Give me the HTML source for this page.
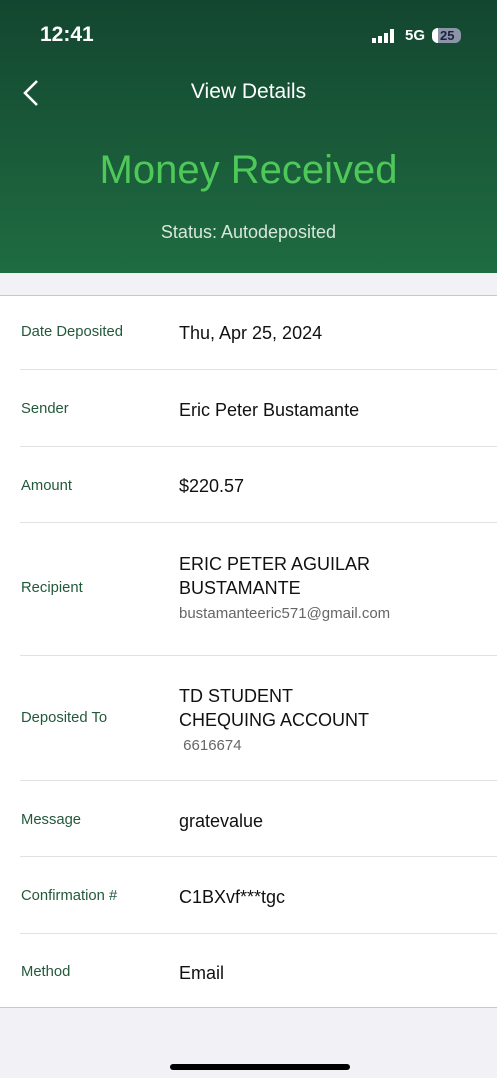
<!DOCTYPE html><html><head><style>
body{margin:0;width:497px;height:1078px;position:relative;background:#f2f1f6;font-family:"Liberation Sans",sans-serif;overflow:hidden}
.hd{position:absolute;left:0;top:0;width:497px;height:273px;background:linear-gradient(#134630,#1f6c41)}
.a{position:absolute;white-space:nowrap}
.card{position:absolute;left:0;top:295px;width:497px;height:711px;background:#fff;border-top:1px solid #c8c8c8;border-bottom:1px solid #c8c8c8}
.sep{position:absolute;left:20px;right:0;height:1px;background:#e2e2e2}
.l{position:absolute;left:21px;font-size:14.8px;color:#23593b}
.v{position:absolute;left:179px;font-size:18px;color:#111;line-height:24px}
.s{font-size:15px;color:#666}
</style></head><body>
<div class="hd"></div>
<div class="a" style="left:40px;top:23px;font-size:21px;font-weight:bold;color:#fff">12:41</div>
<div class="a" style="left:372px;top:28px;width:23px;height:15px">
<div style="position:absolute;left:0;bottom:0;width:4px;height:5px;background:#fff"></div>
<div style="position:absolute;left:6px;bottom:0;width:4px;height:7px;background:#fff"></div>
<div style="position:absolute;left:12px;bottom:0;width:4px;height:10px;background:#fff"></div>
<div style="position:absolute;left:18px;bottom:0;width:4px;height:14px;background:#fff"></div></div>
<div class="a" style="left:405px;top:27px;font-size:15px;font-weight:bold;color:#fff">5G</div>
<div class="a" style="left:432px;top:28px;width:29px;height:15px;border-radius:6px;background:#8c94a8;overflow:hidden"><div style="position:absolute;left:0;top:0;width:6px;height:15px;background:#fff"></div><span style="position:absolute;left:8px;top:0;font-size:13px;font-weight:bold;color:#1a2240">25</span></div>
<svg class="a" style="left:20px;top:79px" width="22" height="28"><path d="M17 2 L5 14 L17 26" stroke="#fff" stroke-width="2.6" fill="none"/></svg>
<div class="a" style="left:0;width:497px;text-align:center;top:80px;font-size:21px;color:#fff">View Details</div>
<div class="a" style="left:0;width:497px;text-align:center;top:148px;font-size:40px;color:#4fc85a">Money Received</div>
<div class="a" style="left:0;width:497px;text-align:center;top:222px;font-size:18px;color:#d8e6dc">Status: Autodeposited</div>
<div class="card">
<div class="sep" style="top:73px"></div><div class="sep" style="top:150px"></div><div class="sep" style="top:226px"></div><div class="sep" style="top:359px"></div><div class="sep" style="top:484px"></div><div class="sep" style="top:560px"></div><div class="sep" style="top:637px"></div>
<div class="l" style="top:28px">Date Deposited</div><div class="v" style="top:25px">Thu, Apr 25, 2024</div>
<div class="l" style="top:105px">Sender</div><div class="v" style="top:102px">Eric Peter Bustamante</div>
<div class="l" style="top:182px">Amount</div><div class="v" style="top:178px">$220.57</div>
<div class="l" style="top:284px">Recipient</div><div class="v" style="top:256px">ERIC PETER AGUILAR<br>BUSTAMANTE<br><span class="s">bustamanteeric571@gmail.com</span></div>
<div class="l" style="top:414px">Deposited To</div><div class="v" style="top:388px">TD STUDENT<br>CHEQUING ACCOUNT<br><span class="s">&nbsp;6616674</span></div>
<div class="l" style="top:516px">Message</div><div class="v" style="top:513px">gratevalue</div>
<div class="l" style="top:592px">Confirmation #</div><div class="v" style="top:589px">C1BXvf***tgc</div>
<div class="l" style="top:668px">Method</div><div class="v" style="top:665px">Email</div>
</div>
<div class="a" style="left:170px;top:1064px;width:180px;height:6px;border-radius:3px;background:#000"></div>
</body></html>
